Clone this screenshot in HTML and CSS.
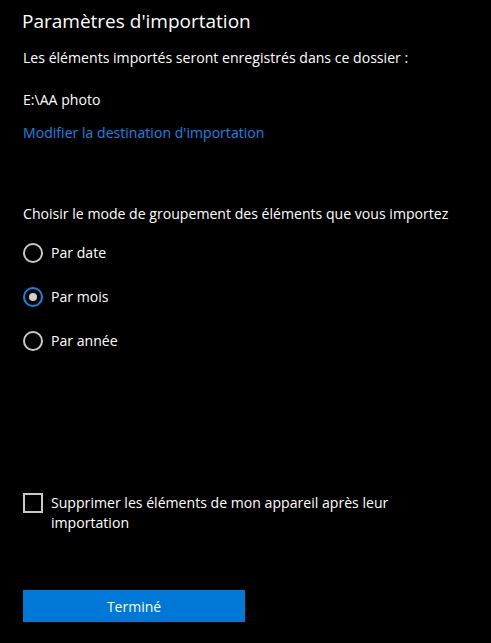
FILE: index.html
```html
<!DOCTYPE html>
<html lang="fr">
<head>
  <meta charset="UTF-8">
  <meta name="viewport" content="width=device-width, initial-scale=1.0">
  <title>Paramètres d'importation</title>
  <link rel="stylesheet" href="styles.css">
</head>
<body>

  <div class="import-settings">
    <h1>Paramètres d'importation</h1>

    <p class="folder-note">Les éléments importés seront enregistrés dans ce dossier :</p>
    <p class="folder-path">E:\AA photo</p>
    <a class="change-link" href="#">Modifier la destination d'importation</a>

    <div class="group-section">
      <p class="group-title">Choisir le mode de groupement des éléments que vous importez</p>

      <label class="radio-row">
        <span class="radio"></span>
        <span>Par date</span>
      </label>
      <label class="radio-row">
        <span class="radio checked"></span>
        <span>Par mois</span>
      </label>
      <label class="radio-row">
        <span class="radio"></span>
        <span>Par année</span>
      </label>
    </div>

    <label class="check-row">
      <span class="checkbox"></span>
      <span>Supprimer les éléments de mon appareil après leur importation</span>
    </label>

    <button class="done-button" type="button">Terminé</button>
  </div>

</body>
</html>
```

FILE: styles.css
```css
/* General Styles */
body {
  margin: 0;
  padding: 0;
  background-color: #000;
  color: #fff;
  font-family: 'Open Sans', 'Noto Sans', sans-serif;
  font-size: 14.1px;
  height: 643px;
}

.import-settings {
  padding: 8px 23px 0 23px;
  display: flex;
  flex-direction: column;
  align-items: flex-start;
}

.import-settings h1 {
  font-size: 19px;
  font-weight: normal;
  margin: 0 0 0 -1px;
  line-height: 26px;
}

.folder-note {
  margin: 14px 0 0 0;
  line-height: 20px;
}

.folder-path {
  margin: 22px 0 0 0;
  line-height: 20px;
}

.change-link {
  margin-top: 13px;
  line-height: 20px;
  color: #0f87e4;
  text-decoration: none;
}

.group-section {
  margin-top: 61px;
  display: flex;
  flex-direction: column;
  gap: 24px;
}

.group-title {
  margin: 0 0 -5px 0;
  line-height: 20px;
}

.radio-row,
.check-row {
  display: flex;
  align-items: center;
  gap: 8px;
  line-height: 20px;
}

.radio {
  width: 16px;
  height: 16px;
  border: 2px solid #c8c8c8;
  border-radius: 50%;
  display: flex;
  align-items: center;
  justify-content: center;
  flex-shrink: 0;
}

.radio.checked {
  border-color: #0f87e4;
}

.radio.checked::after {
  content: '';
  width: 8px;
  height: 8px;
  border-radius: 50%;
  background-color: #d0d0d0;
}

.check-row {
  margin-top: 142px;
  align-items: flex-start;
  width: 380px;
}

.checkbox {
  width: 16px;
  height: 16px;
  border: 2px solid #c8c8c8;
  flex-shrink: 0;
}

.done-button {
  margin-top: 57px;
  width: 222px;
  height: 32px;
  border: none;
  background-color: #0078d7;
  color: #fff;
  font-family: 'Open Sans', 'Noto Sans', sans-serif;
  font-size: 14px;
  padding: 0;
}
```
